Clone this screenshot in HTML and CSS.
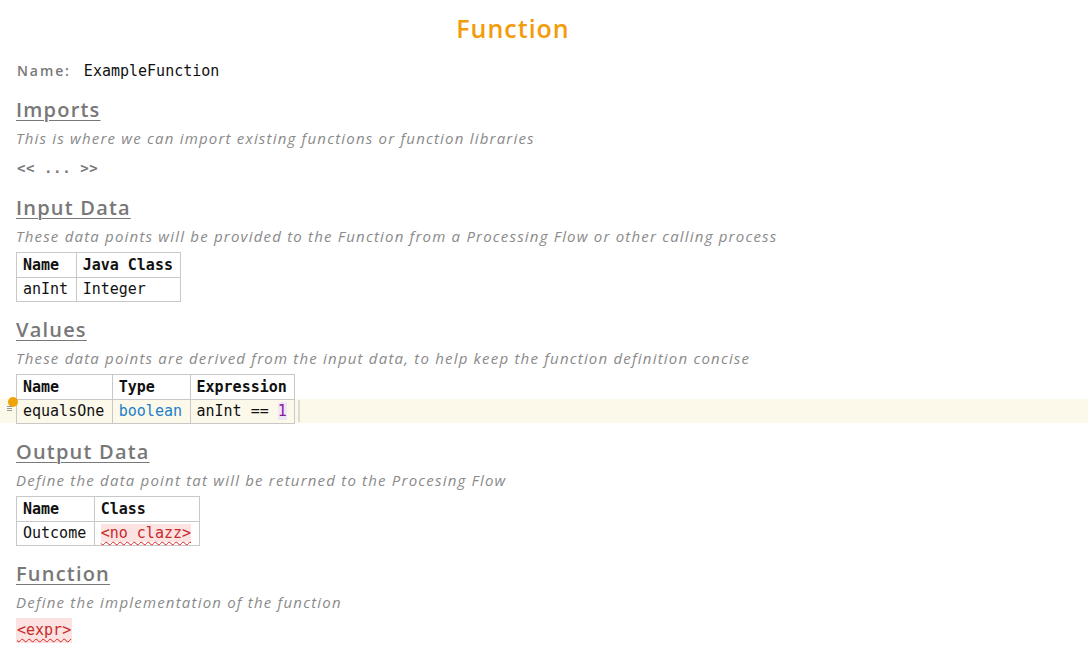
FILE: index.html
```html
<!DOCTYPE html>
<html>
<head>
<meta charset="utf-8">
<link rel="stylesheet" href="styles.css">
</head>
<body>
<div class="page">
  <h1 class="title">Function</h1>

  <div class="name-row">
    <span class="label">Name:</span>
    <span class="mono">ExampleFunction</span>
  </div>

  <section class="section">
    <h2 class="heading">Imports</h2>
    <p class="desc">This is where we can import existing functions or function libraries</p>
    <div class="placeholder">&lt;&lt; ... &gt;&gt;</div>
  </section>

  <section class="section after-imports">
    <h2 class="heading">Input Data</h2>
    <p class="desc">These data points will be provided to the Function from a Processing Flow or other calling process</p>
    <table class="grid">
      <tr><th>Name</th><th>Java Class</th></tr>
      <tr><td>anInt</td><td>Integer</td></tr>
    </table>
  </section>

  <section class="section">
    <h2 class="heading">Values</h2>
    <p class="desc">These data points are derived from the input data, to help keep the function definition concise</p>
    <div class="values-wrap">
      <div class="line-highlight"></div>
      <div class="gutter">
        <span class="bulb"></span>
        <span class="fold"></span>
      </div>
      <table class="grid">
        <tr><th>Name</th><th>Type</th><th>Expression</th></tr>
        <tr><td>equalsOne</td><td class="kw">boolean</td><td>anInt == <span class="num">1</span></td></tr>
      </table>
      <span class="caret"></span>
    </div>
  </section>

  <section class="section">
    <h2 class="heading">Output Data</h2>
    <p class="desc">Define the data point tat will be returned to the Procesing Flow</p>
    <table class="grid">
      <tr><th>Name</th><th>Class</th></tr>
      <tr><td>Outcome</td><td><span class="error">&lt;no clazz&gt;</span></td></tr>
    </table>
  </section>

  <section class="section">
    <h2 class="heading">Function</h2>
    <p class="desc">Define the implementation of the function</p>
    <div class="expr-row"><span class="error big">&lt;expr&gt;</span></div>
  </section>
</div>
</body>
</html>
```

FILE: styles.css
```css
html, body {
  margin: 0;
  padding: 0;
  background: #ffffff;
}

.page {
  padding: 10px 0 0 16px;
  font-family: "Open Sans", "DejaVu Sans", sans-serif;
}

.title {
  margin: 0;
  height: 36px;
  line-height: 36px;
  text-align: center;
  font-size: 25px;
  font-weight: 600;
  letter-spacing: 1px;
  color: #f39c0b;
  padding-right: 78px;
}

.name-row {
  margin-top: 11px;
  height: 28px;
  line-height: 28px;
  display: flex;
  gap: 13px;
  align-items: center;
  padding-left: 1px;
}

.label {
  font-size: 14px;
  font-weight: 600;
  letter-spacing: 1.9px;
  color: #787878;
}

.mono {
  font-family: "DejaVu Sans Mono", "Liberation Mono", monospace;
  font-size: 15px;
  color: #111;
}

.section {
  margin-top: 15px;
}

.name-row + .section,
.section.after-imports {
  margin-top: 12px;
}

.heading {
  margin: 0;
  height: 26px;
  line-height: 26px;
  font-size: 20px;
  font-weight: 600;
  letter-spacing: 1.2px;
  color: #787878;
  display: inline-block;
  text-decoration: underline;
  text-decoration-thickness: 1px;
  text-underline-offset: 3px;
}

.desc {
  margin: 0;
  height: 30px;
  line-height: 30px;
  font-size: 15px;
  font-style: italic;
  color: #8a8a8a;
  letter-spacing: 1.2px;
  white-space: nowrap;
}

.placeholder {
  height: 30px;
  line-height: 30px;
  font-family: "DejaVu Sans Mono", "Liberation Mono", monospace;
  font-size: 14px;
  font-weight: bold;
  letter-spacing: 0.6px;
  color: #777;
  padding-left: 1px;
}

.grid {
  border-collapse: collapse;
  margin-top: 1px;
  font-family: "DejaVu Sans Mono", "Liberation Mono", monospace;
  font-size: 15px;
  color: #111;
}

.grid th, .grid td {
  border: 1px solid #c8c8c8;
  padding: 0 7.5px 0 6px;
  height: 23px;
  line-height: 23px;
  text-align: left;
  white-space: nowrap;
}

.grid th {
  font-weight: bold;
  padding-top: 1px;
}

.values-wrap {
  position: relative;
}

.line-highlight {
  position: absolute;
  left: -16px;
  right: 0;
  top: 25px;
  height: 24px;
  background: #fcf9ea;
}

.values-wrap .grid {
  position: relative;
}

.gutter {
  position: absolute;
  left: -8px;
  top: 23px;
  width: 8px;
  height: 14px;
  z-index: 2;
}

.bulb {
  position: absolute;
  left: 0;
  top: 0;
  width: 10px;
  height: 10px;
  border-radius: 50%;
  background: #f0a30a;
}

.fold {
  position: absolute;
  left: -1px;
  top: 9px;
  width: 5px;
  height: 5px;
  border-top: 1px solid #999;
  border-bottom: 1px solid #999;
  box-sizing: border-box;
}

.fold::after {
  content: "";
  position: absolute;
  left: 0;
  right: 0;
  top: 1px;
  border-top: 1px solid #999;
}

.caret {
  position: absolute;
  left: 282px;
  top: 26px;
  width: 2px;
  height: 22px;
  background: #dcdcd4;
}

.kw {
  color: #1d80c8;
}

.num {
  color: #8d1a9a;
  background: #efe6f6;
}

.error {
  color: #c62a2a;
  background: #fde2e2;
  text-decoration: underline wavy #d22;
  text-decoration-thickness: 1px;
  text-underline-offset: 3px;
}

.expr-row {
  margin-top: 1px;
  font-family: "DejaVu Sans Mono", "Liberation Mono", monospace;
  font-size: 15px;
  height: 25px;
  line-height: 25px;
}

.expr-row .error {
  display: inline-block;
  padding: 0 1px;
  height: 25px;
}
```
